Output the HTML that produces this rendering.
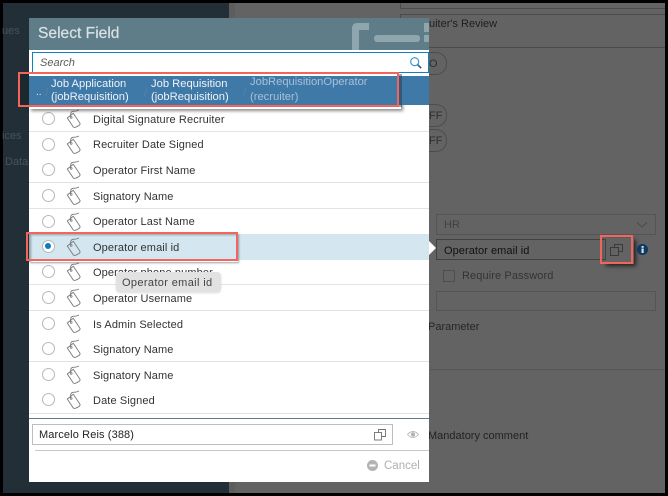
<!DOCTYPE html>
<html><head><meta charset="utf-8">
<style>
html,body{margin:0;padding:0;width:668px;height:496px;overflow:hidden;background:#000}
*{box-sizing:border-box}
body{font-family:"Liberation Sans",sans-serif;position:relative}
.a{position:absolute}
.t{position:absolute;white-space:nowrap}
.row{position:absolute;left:29px;width:400px;height:26px;border-bottom:1px solid #e2e2e2;background:#fff}
.row .r{position:absolute;left:13px;top:6px;width:13px;height:13px;border:1px solid #b8b8b8;border-radius:50%;background:#fff}
.row svg{position:absolute;left:37px;top:2px}
.row span{position:absolute;left:64px;top:7px;font-size:11px;line-height:14px;color:#333;white-space:nowrap;letter-spacing:.12px}
.pill{position:absolute;border:1px solid #4c4c4c;border-left:none;border-radius:0 11px 11px 0;width:18px;height:23px;left:429px;font-size:11px;line-height:22px;color:#2f2f2f}
</style></head><body>
<svg width="0" height="0" style="position:absolute"><symbol id="tag" viewBox="0 0 18 24"><path d="M1.300 10L7.300 5.300L14 15.300Q14.300 16.500 13 17.500L10.600 18.800Q8.800 20 7.300 19Z" fill="none" stroke="#777" stroke-width=".9"/><circle cx="5.200" cy="9.400" r=".9" fill="none" stroke="#777" stroke-width=".8"/><path d="M4.600 8.500Q4.200 3.500 7 3.300Q10.500 3.300 13 2" fill="none" stroke="#777" stroke-width=".9"/></symbol></svg>
<div class="a" style="left:3px;top:3px;width:662px;height:490px;background:#636363;overflow:hidden">
  <div class="a" style="left:0;top:0;width:226px;height:490px;background:#232f36"></div>
  <div class="a" style="left:226px;top:0;width:6px;height:490px;background:#5d5d5d"></div>
</div>
<span class="t" style="left:2px;top:25px;font-size:11px;color:#46535a">ues</span>
<span class="t" style="left:2px;top:130px;font-size:11px;color:#46535a">ices</span>
<span class="t" style="left:5px;top:156px;font-size:11px;color:#46535a">Data</span>

<div class="a" style="left:400px;top:3px;width:265px;height:6px;border-bottom:1px solid #4b4b4b;border-left:1px solid #4b4b4b"></div>
<div class="a" style="left:400px;top:14px;width:265px;height:4px;border-top:1px solid #4b4b4b;border-left:1px solid #4b4b4b"></div>
<div class="a" style="left:429px;top:47px;width:236px;height:1px;background:#4b4b4b"></div>
<span class="t" style="left:429px;top:17px;font-size:11px;line-height:14px;color:#1f1f1f">uiter's Review</span>
<div class="pill" style="top:52px">O</div>
<div class="pill" style="top:104px">FF</div>
<div class="pill" style="top:129px">FF</div>

<div class="a" style="left:436px;top:214px;width:220px;height:21px;border:1px solid #555"></div>
<span class="t" style="left:444px;top:218px;font-size:11px;line-height:14px;color:#414141">HR</span>
<svg class="a" style="left:636px;top:221px" width="12" height="8"><path d="M1 1.500L6 6L11 1.500" fill="none" stroke="#4a4a4a"/></svg>
<div class="a" style="left:436px;top:239px;width:170px;height:21px;border:1px solid #414141"></div>
<span class="t" style="left:444px;top:244px;font-size:11px;line-height:14px;color:#111;letter-spacing:.06px">Operator email id</span>
<div class="a" style="left:604px;top:238px;width:30px;height:26px;box-shadow:2px 2px 4px #222"></div>
<div class="a" style="left:600px;top:235px;width:33px;height:29px;border:2px solid #f3655c"></div>
<svg class="a" style="left:610px;top:244px" width="13" height="12" fill="none" stroke="#3a3a3a" stroke-width="1"><path d="M4.500 3.500V.5H12.500V7.500H8.500"/><rect x=".5" y="3.500" width="8" height="8"/></svg>
<svg class="a" style="left:637px;top:244px" width="11" height="11"><circle cx="5.500" cy="5.500" r="5.500" fill="#0b3a63"/><rect x="4.500" y="4.500" width="2.200" height="4.500" fill="#ddd"/><rect x="4.500" y="2" width="2.200" height="1.800" fill="#ddd"/></svg>
<div class="a" style="left:443px;top:270px;width:12px;height:12px;border:1px solid #4d4d4d"></div>
<span class="t" style="left:462px;top:269px;font-size:11px;line-height:14px;color:#343434;letter-spacing:.1px">Require Password</span>
<div class="a" style="left:436px;top:291px;width:220px;height:20px;border:1px solid #555"></div>
<span class="t" style="left:428px;top:320px;font-size:11px;line-height:14px;color:#252525">Parameter</span>
<span class="t" style="left:428px;top:429px;font-size:11px;line-height:14px;color:#222">Mandatory comment</span>
<div class="a" style="left:430px;top:369px;width:235px;height:1px;background:#555"></div>

<!-- modal -->
<div class="a" style="left:29px;top:18px;width:400px;height:464px;background:#fff"></div>
<div class="a" style="left:29px;top:18px;width:400px;height:32px;background:#5f7d88;overflow:hidden">
  <span class="t" style="left:9px;top:7px;font-size:15.600px;line-height:18px;color:#d9e2e5;-webkit-text-stroke:.2px #d9e2e5">Select Field</span>
  <div class="a" style="left:323px;top:5px;width:17px;height:40px;border:7px solid #8fa6af;border-right:none;border-bottom:none;border-radius:5px 0 0 0"></div>
  <div class="a" style="left:345px;top:17px;width:46px;height:7px;background:#8fa6af;border-radius:3px"></div>
  <div class="a" style="left:395px;top:5px;width:5px;height:9px;background:#8fa6af"></div>
  <div class="a" style="left:395px;top:17px;width:5px;height:7px;background:#8fa6af"></div>
</div>
<div class="a" style="left:32px;top:52px;width:397px;height:21px;border:1px solid #0a82c4;background:#fff"></div>
<span class="t" style="left:40px;top:56px;font-size:11px;line-height:14px;font-style:italic;color:#5a5a5a">Search</span>
<svg class="a" style="left:410px;top:57px" width="12" height="12" fill="none" stroke="#2d93cc" stroke-width="1.100"><circle cx="4.700" cy="4.700" r="4"/><path d="M7.700 7.700L11.200 11.200" stroke-width="1.500" stroke="#2b5d80"/></svg>

<!-- rows -->
<div class="row" style="top:106px"><div class="r"></div><svg width="18" height="24"><use href="#tag"/></svg><span>Digital Signature Recruiter</span></div>
<div class="row" style="top:132px"><div class="r"></div><svg width="18" height="24"><use href="#tag"/></svg><span style="top:6px">Recruiter Date Signed</span></div>
<div class="row" style="top:157px"><div class="r"></div><svg width="18" height="24"><use href="#tag"/></svg><span>Operator First Name</span></div>
<div class="row" style="top:183px"><div class="r"></div><svg width="18" height="24"><use href="#tag"/></svg><span>Signatory Name</span></div>
<div class="row" style="top:209px"><div class="r"></div><svg width="18" height="24"><use href="#tag"/></svg><span style="top:6px">Operator Last Name</span></div>
<div class="row" style="top:259px"><div class="r"></div><svg width="18" height="24"><use href="#tag"/></svg><span>Operator phone number</span></div>
<div class="row" style="top:285px"><div class="r"></div><svg width="18" height="24"><use href="#tag"/></svg><span>Operator Username</span></div>
<div class="row" style="top:311px"><div class="r"></div><svg width="18" height="24"><use href="#tag"/></svg><span>Is Admin Selected</span></div>
<div class="row" style="top:336px"><div class="r"></div><svg width="18" height="24"><use href="#tag"/></svg><span>Signatory Name</span></div>
<div class="row" style="top:362px"><div class="r"></div><svg width="18" height="24"><use href="#tag"/></svg><span>Signatory Name</span></div>
<div class="row" style="top:387px;height:27px"><div class="r"></div><svg width="18" height="24"><use href="#tag"/></svg><span>Date Signed</span></div>

<!-- selected row -->
<div class="row" style="top:234px;background:#d4e7f0;border:none;height:26px"><div class="r"></div><div class="a" style="left:16px;top:9px;width:6px;height:6px;border-radius:50%;background:#0a7cc0"></div><svg width="18" height="24"><use href="#tag"/></svg><span>Operator email id</span></div>
<div class="a" style="left:29px;top:233px;width:209px;height:29px;box-shadow:inset 2px 2px 2px rgba(70,70,70,.45),1px 1px 2px rgba(70,70,70,.5)"></div>
<div class="a" style="left:26px;top:232px;width:212px;height:29px;border:2px solid #f3655c"></div>
<svg class="a" style="left:429px;top:241px" width="8" height="14"><path d="M0 0L7 7L0 14Z" fill="#fff"/></svg>

<!-- tooltip -->
<div class="a" style="left:116px;top:272px;width:105px;height:20px;background:#e2e2e2;border-radius:4px;box-shadow:0 1px 2px rgba(0,0,0,.15)"></div>
<span class="t" style="left:122px;top:276px;font-size:11px;line-height:14px;color:#444;letter-spacing:.36px">Operator email id</span>

<!-- breadcrumb -->
<div class="a" style="left:29px;top:76px;width:400px;height:29px;background:#3f79a8"></div>
<div class="a" style="left:29px;top:76px;width:372px;height:33px;box-shadow:2px 2px 3px rgba(50,50,50,.55);clip-path:inset(29px -6px -6px -6px)"></div>
<div class="a" style="left:398px;top:74px;width:4px;height:33px;background:rgba(40,50,60,.45)"></div>
<div class="a" style="left:18px;top:72px;width:381px;height:35px;border:2px solid #f3655c"></div>
<div class="a" style="left:20px;top:74px;width:9px;height:31px;background:#1d282e"></div>
<span class="t" style="left:36px;top:87px;font-size:10px;line-height:12px;color:#dfe9f1">..</span>
<span class="t" style="left:45px;top:85px;font-size:12px;line-height:14px;color:#5e7f9b">/</span>
<span class="t" style="left:51px;top:78px;font-size:11.200px;line-height:13px;color:#eef3f8">Job Application<br>(jobRequisition)</span>
<span class="t" style="left:144px;top:85px;font-size:12px;line-height:14px;color:#5e7f9b">/</span>
<span class="t" style="left:151px;top:78px;font-size:11.200px;line-height:13px;color:#eef3f8">Job Requisition<br>(jobRequisition)</span>
<span class="t" style="left:243px;top:85px;font-size:12px;line-height:14px;color:#5e7f9b">/</span>
<span class="t" style="left:250px;top:75px;font-size:11.200px;line-height:15px;color:#a6c1d8">JobRequisitionOperator<br>(recruiter)</span>

<!-- footer -->
<div class="a" style="left:29px;top:418px;width:400px;height:1px;background:#5f7d88"></div>
<div class="a" style="left:32px;top:424px;width:361px;height:21px;border:1px solid #bdbdbd;background:#fff"></div>
<span class="t" style="left:39px;top:428px;font-size:11px;line-height:14px;color:#222;letter-spacing:.12px">Marcelo Reis (388)</span>
<svg class="a" style="left:374px;top:429px" width="13" height="12" fill="none" stroke="#707070" stroke-width=".9"><path d="M4.500 3.500V.5H11.500V7.500H7.500"/><rect x=".5" y="3.500" width="7" height="7.500"/></svg>
<svg class="a" style="left:407px;top:430px" width="12" height="9"><path d="M.5 4.500Q6 -1.500 11.500 4.500Q6 10.500 .5 4.500Z" fill="none" stroke="#b9b9b9" stroke-width=".9"/><circle cx="6" cy="4.500" r="2.200" fill="#b3b3b3"/></svg>
<div class="a" style="left:35px;top:450px;width:394px;height:1px;background:#c8c8c8"></div>
<svg class="a" style="left:367px;top:460px" width="11" height="11"><circle cx="5.500" cy="5.500" r="5.500" fill="#b3b3b3"/><rect x="2.500" y="4.500" width="6" height="2" fill="#fff"/></svg>
<span class="t" style="left:384px;top:459px;font-size:11.500px;line-height:14px;color:#b0b0b0">Cancel</span>
</body></html>
